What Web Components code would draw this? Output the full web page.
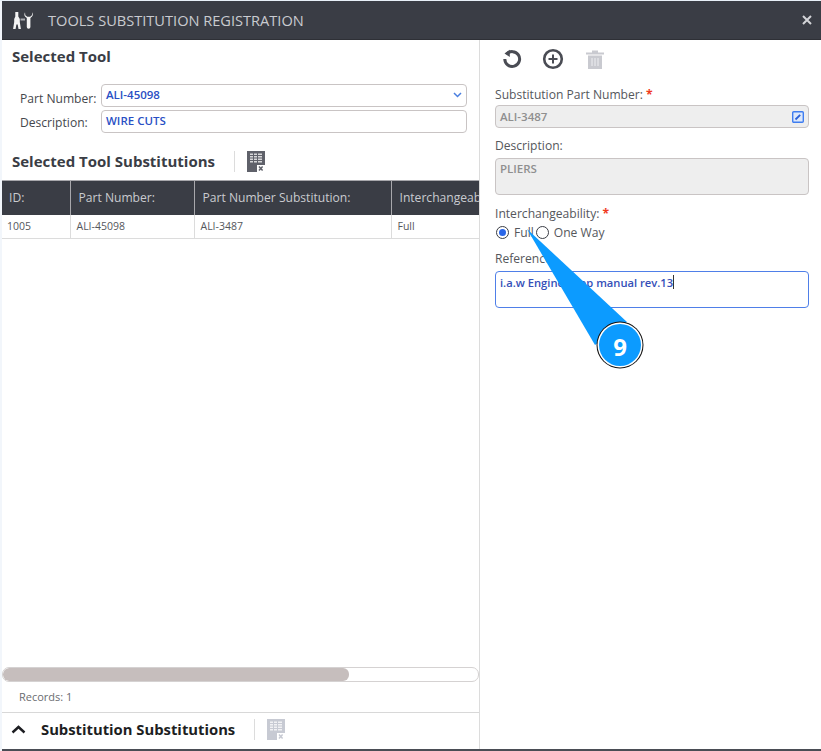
<!DOCTYPE html>
<html><head><meta charset="utf-8"><title>Tools Substitution Registration</title>
<style>
html,body{margin:0;padding:0;height:100%;background:#fff;overflow:hidden}
body{font-family:"Open Sans","Noto Sans",sans-serif}
</style></head><body>
<tool-window></tool-window>
<template id="xls"><svg width="18" height="21" viewBox="0 0 18 21" style="display:block"><rect width="18" height="21" fill="currentColor"/><g fill="#fff" opacity=".75"><rect x="3" y="2.500" width="3" height="1.500"/><rect x="7" y="2.500" width="3" height="1.500"/><rect x="11" y="2.500" width="4" height="1.500"/><rect x="3" y="5" width="3" height="1.500"/><rect x="7" y="5" width="3" height="1.500"/><rect x="11" y="5" width="4" height="1.500"/><rect x="3" y="7.500" width="3" height="1.500"/><rect x="7" y="7.500" width="3" height="1.500"/><rect x="11" y="7.500" width="4" height="1.500"/><rect x="3" y="10" width="3" height="1.500"/><rect x="7" y="10" width="3" height="1.500"/><rect x="11" y="10" width="4" height="1.500"/></g><rect x="10" y="14" width="8" height="7" fill="#fff"/><path d="M12 15.500l3.600 4M15.600 15.500L12 19.500" stroke="currentColor" stroke-width="1.500"/></svg></template>
<script>
const FONT='"Open Sans","Noto Sans",sans-serif';
const xls=()=>document.getElementById('xls').innerHTML;
function def(name,css,html){
  customElements.define(name,class extends HTMLElement{
    connectedCallback(){
      if(this.shadowRoot)return;
      const r=this.attachShadow({mode:'open'});
      r.innerHTML=`<style>${css}</style>`+(typeof html==='function'?html(this):html);
    }
  });
}
def('title-bar',`
:host{display:flex;align-items:center;height:38px;margin-top:1px;background:#3a3d45;color:#c9cbd0;padding:0 9px 0 11px;flex:none;border-bottom:1px solid #2e3036;box-sizing:content-box}
svg.l{display:block;margin-right:14px}
span{font-size:14.6px;flex:1;white-space:nowrap}
svg.x{display:block}
`,`<svg class="l" width="21" height="17" viewBox="0 0 21 17" fill="#f4f4f4"><path d="M2.300 0h3v4.500l1.500 2.500v3l1.100 7H5.500l-.8-4.500H3.400L2.600 17H.1l1.100-7V7L2.300 4.500z"/><path d="M7.500 6.500h4.500v2H7.500z" fill="#a9abb0"/><path d="M12 .3c-1.200 2.200-.7 4.500 1.800 5.700v9a1.800 1.800 0 0 0 3.600 0V6c2.500-1.200 3-3.500 1.800-5.700l-.3 3-1.800 1.400h-2.800L12.300 3.300z"/></svg><span>TOOLS SUBSTITUTION REGISTRATION</span><svg class="x" width="10" height="10" viewBox="0 0 10 10"><path d="M1 1l8 8M9 1L1 9" stroke="#d3d4d8" stroke-width="2"/></svg>`);

def('text-box',`
:host{display:flex;align-items:center;box-sizing:border-box;border:1px solid #c9c4c4;border-radius:4px;background:#fff;font-size:11.5px;font-weight:600;color:#2a4fc4;padding:0 4px;height:23px}
:host([disabled]){background:#eeeeee;color:#8f8f8f}
:host([lift]){padding-bottom:2px}
:host([multi]){align-items:flex-start;padding-top:2px;height:37px}
:host([focus]){border-color:#4f7fe8;color:#3550b8;font-size:11.2px;padding-top:3px}
.v{flex:1;white-space:nowrap}
`,`<span class="v"><slot></slot></span><slot name="end"></slot>`);

def('selected-tool',`
:host{display:block;flex:none}
h2{margin:0;font-size:15px;font-weight:700;color:#3a3d45;line-height:20px;padding:6px 0 0 10px}
.f{display:grid;grid-template-columns:78px 366px;column-gap:3px;row-gap:3px;padding:18px 0 0 18px;align-items:center;font-size:12.1px;color:#45474d}
.f label{white-space:nowrap}
`,`<h2>Selected Tool</h2><div class="f"><label style="padding-top:5px">Part Number:</label><text-box lift>ALI-45098<svg slot="end" width="9" height="6" viewBox="0 0 9 6"><path d="M1 1l3.500 3.500L8 1" fill="none" stroke="#4a7fe0" stroke-width="1.500"/></svg></text-box><label style="padding-top:2px">Description:</label><text-box lift>WIRE CUTS</text-box></div>`);

def('sub-bar',`
:host{display:flex;align-items:center;flex:none;height:var(--h,31px);color:#5f616a}
h2{margin:0;font-size:var(--fs,15px);font-weight:700;color:var(--c,#3a3d45);white-space:nowrap;padding-bottom:var(--pb,0)}
i{display:block;width:1px;height:21px;background:#dcdcdc;margin:0 12px 0 19px}
`,()=>`<slot name="pre"></slot><h2><slot></slot></h2><i></i>${xls()}`);

def('sub-grid',`
:host{display:block;flex:1;overflow:hidden;min-height:0}
table{border-collapse:collapse;table-layout:fixed;width:560px;font-size:10.5px}
th{background:#3a3d45;color:#c9cbd0;font-weight:400;font-size:12.1px;text-align:left;height:34px;padding:0 0 0 8px;border-right:1px solid #a8a8ac;border-top:1px solid #a8a8ac;white-space:nowrap;overflow:hidden;box-sizing:border-box}
td{height:24px;padding:0 0 0 6px;color:#55575c;border-right:1px solid #dcdcdc;border-bottom:1px solid #dcdcdc;box-sizing:border-box;white-space:nowrap}
th:first-child{padding-left:7px}
td:first-child{padding-left:5px}
`,`<table><colgroup><col style="width:68px"><col style="width:124px"><col style="width:197px"><col style="width:171px"></colgroup><tr><th>ID:</th><th>Part Number:</th><th>Part Number Substitution:</th><th>Interchangeability:</th></tr><tr><td>1005</td><td>ALI-45098</td><td>ALI-3487</td><td>Full</td></tr></table>`);

def('h-scroll',`
:host{display:block;flex:none;height:15px;box-sizing:border-box;border:1px solid #d5d2d2;border-radius:7px;background:#fff;overflow:hidden}
div{width:346px;height:100%;background:#c6bebd;border-radius:6px}
`,`<div></div>`);

def('left-pane',`
:host{display:flex;flex-direction:column;width:477px;flex:none;min-height:0;border-right:1px solid #dcdcdc}
.r{font-size:11px;color:#6a6c70;height:31px;line-height:30px;padding-left:17px;flex:none;box-sizing:border-box;border-bottom:1px solid #d8d8d8}
.sc{display:flex;flex-direction:column;flex:1;min-height:0}
`,`<div class="sc"><selected-tool></selected-tool>
<sub-bar style="--h:38px;padding:9px 0 0 10px"><span>Selected Tool Substitutions</span></sub-bar>
<sub-grid></sub-grid><h-scroll></h-scroll><div class="r">Records: 1</div></div>
<sub-bar style="--h:33px;--fs:14.8px;--pb:2px;--c:#1d1e22;color:#c7cad3;padding:0 0 3px 9px"><svg slot="pre" width="15" height="9" viewBox="0 0 15 9" style="margin-right:15px"><path d="M1.500 7.500l6-5.500 6 5.500" fill="none" stroke="#1d1e22" stroke-width="2.400"/></svg>Substitution Substitutions</sub-bar>`);

def('field-row',`
:host{display:block;font-size:12.1px;color:#55575c}
label{display:block;line-height:17px;white-space:nowrap}
b{color:#f03a20;font-weight:700}
`,h=>`<label>${h.getAttribute('label')}${h.hasAttribute('req')?' <b>*</b>':''}</label><slot></slot>`);

def('radio-pick',`
:host{display:inline-flex;align-items:center;font-size:12.1px;color:#55575c;line-height:17px}
i{display:block;width:13px;height:13px;border:1.5px solid #3a3d45;border-radius:50%;box-sizing:border-box;margin-right:5px;position:relative}
:host([on]) i::after{content:"";position:absolute;inset:2px;border-radius:50%;background:#2a66e8}
`,`<i></i><slot></slot>`);

def('tool-strip',`
:host{display:flex;align-items:center;gap:19px;height:36px;flex:none}
svg{display:block}
`,`<svg width="22" height="22" viewBox="0 0 22 22" fill="none"><path d="M5.500 6.300A7.400 7.400 0 1 1 3.800 11" stroke="#4a4c54" stroke-width="3"/><path d="M8.800 1.800v7.200L3.500 5.600z" fill="#4a4c54"/></svg><svg width="22" height="22" viewBox="0 0 22 22" fill="none"><circle cx="11" cy="11" r="8.800" stroke="#4a4c54" stroke-width="2.600"/><path d="M11 6.500v9M6.500 11h9" stroke="#4a4c54" stroke-width="2"/></svg><svg width="20" height="21" viewBox="0 0 20 21" style="margin-left:2px"><path d="M1 3.500h18v2H1zM7 1.500h6v2H7zM3 6.500h14V20H3z" fill="#c9cad0"/><path d="M7 9v8M10 9v8M13 9v8" stroke="#e6e6ea" stroke-width="1.300"/></svg>`);

def('right-pane',`
:host{display:flex;flex-direction:column;flex:1;min-width:0;padding:0 12px 0 15px;box-sizing:border-box}
.s{display:flex;flex-direction:column}
text-box{margin-top:2px}
`,`<tool-strip style="margin:1px 0 0 6px"></tool-strip>
<div class="s" style="padding-top:9px"><field-row label="Substitution Part Number:" req><text-box disabled>ALI-3487<svg slot="end" width="12" height="12" viewBox="0 0 12 12"><rect x=".7" y=".7" width="10.600" height="10.600" rx="1" fill="#dce8fb" stroke="#3f7df0" stroke-width="1.400"/><path d="M3.500 8.500L8.200 3.800" stroke="#2a5fd8" stroke-width="1.800"/></svg></text-box></field-row></div>
<div class="s" style="padding-top:9px"><field-row label="Description:"><text-box disabled multi style="margin-top:4px">PLIERS</text-box></field-row></div>
<div class="s" style="padding-top:10px"><field-row label="Interchangeability:" req><div style="display:flex;align-items:center;height:21px;padding-left:1px"><radio-pick on>Full</radio-pick><radio-pick style="margin-left:2px">One Way</radio-pick></div></field-row></div>
<div class="s" style="padding-top:7px"><field-row label="Reference:"><text-box focus multi style="margin-top:4px">i.a.w Engine shop manual rev.13<span style="display:inline-block;width:1px;height:14px;background:#333;vertical-align:-2px"></span></text-box></field-row></div>`);

def('callout-pin',`
:host{position:absolute;left:0;top:0;width:821px;height:751px;pointer-events:none;display:block}
svg{position:absolute;left:0;top:0}
span{position:absolute;left:598px;top:325px;width:44px;height:44px;display:flex;align-items:center;justify-content:center;color:#fff;font-weight:700;font-size:24px;line-height:1;font-family:${FONT}}
`,`<svg width="821" height="751"><path d="M527 229L627 322 595 345z" fill="#0c9bff"/><circle cx="620" cy="345" r="23.500" fill="#111"/><circle cx="620" cy="345" r="22.500" fill="#fff"/><circle cx="620" cy="345" r="21" fill="#0c9bff"/></svg><span>9</span>`);

def('tool-window',`
:host{display:flex;flex-direction:column;position:relative;width:821px;height:751px;box-sizing:border-box;background:#fff;padding:0 0 0 2px;font-family:${FONT}}
.b{display:flex;flex:1;min-height:0;border-bottom:2px solid #4a4d55}
.edge{position:absolute;left:0;top:0;width:2px;height:100%;background:#f2f6fb}
.top{position:absolute;left:0;top:0;width:100%;height:1px;background:#e8f0f8}
`,`<div class="edge"></div><div class="top"></div><title-bar></title-bar><div class="b"><left-pane></left-pane><right-pane></right-pane></div><callout-pin></callout-pin>`);
</script>
</body></html>
